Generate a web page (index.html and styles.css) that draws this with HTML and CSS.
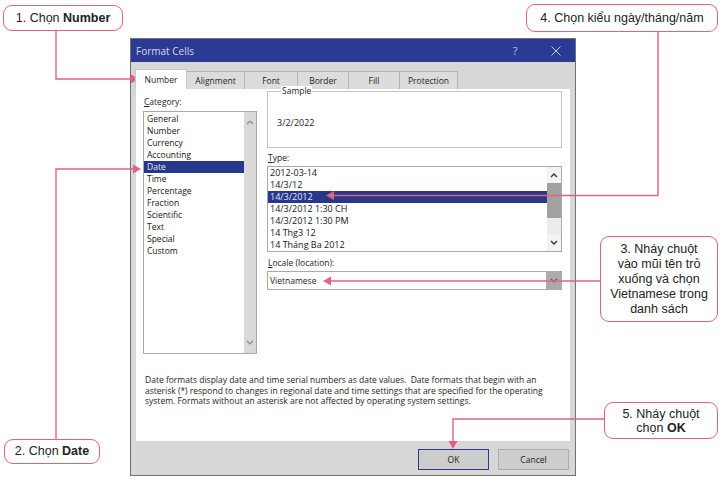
FILE: index.html
```html
<!DOCTYPE html>
<html lang="vi">
<head>
<meta charset="utf-8">
<title>Format Cells</title>
<link rel="stylesheet" href="styles.css">
</head>
<body>
<div class="page">
  <div class="dialog">
    <div class="titlebar">
      <span class="title">Format Cells</span>
      <span class="help">?</span>
      <svg class="close" width="10" height="10" viewBox="0 0 10 10"><path d="M0.5 0.5 L9.5 9.5 M9.5 0.5 L0.5 9.5" stroke="#c9d0ee" stroke-width="1" fill="none"/></svg>
    </div>
    <div class="tabs">
      <div class="tab active t-num">Number</div>
      <div class="tab t-align">Alignment</div>
      <div class="tab t-font">Font</div>
      <div class="tab t-border">Border</div>
      <div class="tab t-fill">Fill</div>
      <div class="tab t-prot">Protection</div>
    </div>
    <div class="panel">
      <div class="cols">
        <div class="leftcol">
          <div class="label"><u>C</u>ategory:</div>
          <div class="listbox cat">
            <div class="items">
              <div class="item">General</div>
              <div class="item">Number</div>
              <div class="item">Currency</div>
              <div class="item">Accounting</div>
              <div class="item sel">Date</div>
              <div class="item">Time</div>
              <div class="item">Percentage</div>
              <div class="item">Fraction</div>
              <div class="item">Scientific</div>
              <div class="item">Text</div>
              <div class="item">Special</div>
              <div class="item">Custom</div>
            </div>
            <div class="vscroll cat-scroll">
              <svg width="8" height="6" viewBox="0 0 8 6"><polyline points="1,5 4,2 7,5" fill="none" stroke="#8a8a8a" stroke-width="1.1"/></svg>
              <svg width="8" height="6" viewBox="0 0 8 6"><polyline points="1,1 4,4 7,1" fill="none" stroke="#8a8a8a" stroke-width="1.1"/></svg>
            </div>
          </div>
        </div>
        <div class="rightcol">
          <fieldset class="sample">
            <legend>Sample</legend>
            <div class="sample-val">3/2/2022</div>
          </fieldset>
          <div class="label"><u>T</u>ype:</div>
          <div class="listbox type">
            <div class="items">
              <div class="item">2012-03-14</div>
              <div class="item">14/3/12</div>
              <div class="item sel">14/3/2012</div>
              <div class="item">14/3/2012 1:30 CH</div>
              <div class="item">14/3/2012 1:30 PM</div>
              <div class="item">14 Thg3 12</div>
              <div class="item">14 Tháng Ba 2012</div>
            </div>
            <div class="vscroll type-scroll">
              <div class="arrow">
                <svg width="8" height="6" viewBox="0 0 8 6"><polyline points="1,5 4,2 7,5" fill="none" stroke="#333" stroke-width="1.3"/></svg>
              </div>
              <div class="thumb"></div>
              <div class="track"></div>
              <div class="arrow">
                <svg width="8" height="6" viewBox="0 0 8 6"><polyline points="1,1 4,4 7,1" fill="none" stroke="#333" stroke-width="1.3"/></svg>
              </div>
            </div>
          </div>
          <div class="label locale-label"><u>L</u>ocale (location):</div>
          <div class="combo">
            <span class="combo-val">Vietnamese</span>
            <div class="combo-btn">
              <svg width="8" height="6" viewBox="0 0 8 6"><polyline points="1,1 4,4 7,1" fill="none" stroke="#7a4a55" stroke-width="1.1"/></svg>
            </div>
          </div>
        </div>
      </div>
      <p class="desc">Date formats display date and time serial numbers as date values.&nbsp; Date formats that begin with an<br>asterisk (*) respond to changes in regional date and time settings that are specified for the operating<br>system. Formats without an asterisk are not affected by operating system settings.</p>
    </div>
    <div class="footer">
      <button class="btn ok">OK</button>
      <button class="btn">Cancel</button>
    </div>
  </div>

  <svg class="connectors" width="720" height="483" viewBox="0 0 720 483">
    <g fill="none" stroke="#e3637f" stroke-width="1.4">
      <path d="M56 31 V79 H132"/>
      <path d="M56 439 V169 H134"/>
      <path d="M658 32 V195.5 H333"/>
      <path d="M600 281 H330"/>
      <path d="M604 419 H453 V442"/>
    </g>
    <g fill="#e3637f">
      <polygon points="131,74.5 139,79 131,83.5"/>
      <polygon points="133,164.5 141,169 133,173.5"/>
      <polygon points="334,191 326,195.5 334,200"/>
      <polygon points="331,276.5 323,281 331,285.5"/>
      <polygon points="448.5,441 453,449 457.5,441"/>
    </g>
  </svg>

  <div class="callout c1"><span>1. Chọn <b>Number</b></span></div>
  <div class="callout c4"><span>4. Chọn kiểu ngày/tháng/năm</span></div>
  <div class="callout c3"><span>3. Nháy chuột<br>vào mũi tên trỏ<br>xuống và chọn<br>Vietnamese trong<br>danh sách</span></div>
  <div class="callout c5"><span>5. Nháy chuột<br>chọn <b>OK</b></span></div>
  <div class="callout c2"><span>2. Chọn <b>Date</b></span></div>
</div>
</body>
</html>
```

FILE: styles.css
```css
body {
  margin: 0;
  background: #ffffff;
}

.page {
  position: relative;
  width: 720px;
  height: 483px;
  box-sizing: border-box;
  padding: 38px 0 0 130px;
  overflow: hidden;
  font-family: "Open Sans", "Noto Sans", sans-serif;
  color: #222;
}

/* ---------- dialog ---------- */
.dialog {
  width: 446px;
  height: 438px;
  box-sizing: border-box;
  border: 1px solid #707070;
  background: #d7d7d7;
  display: flex;
  flex-direction: column;
}

.titlebar {
  flex: none;
  height: 23px;
  background: #2b3a92;
  display: flex;
  align-items: center;
  padding-left: 5px;
  color: #d3d9f1;
  font-size: 10px;
}

.title {
  flex: 1;
}

.help {
  width: 10px;
  margin-right: 31px;
  text-align: center;
  font-size: 11px;
  color: #b7c0e6;
}

.close {
  margin-right: 14px;
}

.tabs {
  flex: none;
  height: 27px;
  display: flex;
  align-items: flex-end;
  padding-left: 4px;
}

.tab {
  height: 18px;
  box-sizing: border-box;
  border: 1px solid #b4b4b4;
  border-bottom: none;
  background: #dcdcdc;
  font-size: 8.5px;
  display: flex;
  align-items: center;
  justify-content: center;
  color: #1e1e1e;
  margin-left: -1px;
}

.tab.active {
  height: 20px;
  background: #ffffff;
  border-color: #c8c8c8;
  margin-left: 0;
  position: relative;
  z-index: 1;
}

.t-num { width: 52px; }
.t-align { width: 59px; }
.t-font { width: 54px; }
.t-border { width: 52px; }
.t-fill { width: 52px; }
.t-prot { width: 59px; }

.panel {
  flex: none;
  height: 352px;
  margin: 0 5px;
  background: #ffffff;
}

.cols {
  display: flex;
}

.leftcol {
  width: 114px;
  margin: 7px 0 0 7px;
}

.rightcol {
  width: 295px;
  margin: -3px 0 0 10px;
}

.label {
  font-size: 8.5px;
  line-height: 12px;
  height: 12px;
  color: #1e1e1e;
  padding-left: 1px;
}

.listbox {
  box-sizing: border-box;
  border: 1px solid #a9a9a9;
  display: flex;
}

.cat {
  margin-top: 3px;
  height: 243px;
}

.items {
  flex: 1;
}

.cat .items {
  padding-top: 1px;
}

.item {
  height: 12px;
  line-height: 12px;
  font-size: 8.5px;
  padding-left: 3px;
  color: #161616;
  white-space: nowrap;
}

.type .item {
  padding-left: 2px;
  font-size: 9px;
}

.item.sel {
  background: #27378b;
  color: #e4e8f7;
}

.vscroll {
  flex: none;
  display: flex;
  flex-direction: column;
  align-items: center;
}

.cat-scroll {
  width: 12px;
  background: #d9d9d9;
  justify-content: space-between;
  padding: 7px 0;
  box-sizing: border-box;
}

.type-scroll {
  width: 14px;
  background: #ececec;
}

.type-scroll .arrow {
  height: 16px;
  width: 14px;
  display: flex;
  align-items: center;
  justify-content: center;
  background: #f4f4f4;
}

.type-scroll .thumb {
  width: 14px;
  height: 35px;
  background: #a2a2a2;
}

.type-scroll .track {
  flex: 1;
}

.sample {
  margin: 0;
  padding: 21px 8px 18px 9px;
  border: 1px solid #c3c3c3;
  min-width: 0;
}

.sample legend {
  font-size: 8.5px;
  line-height: 10px;
  padding: 0 1px;
  margin-left: 4px;
  color: #1e1e1e;
  background: #ffffff;
}

.sample-val {
  font-size: 9px;
  line-height: 12px;
  height: 12px;
}

.rightcol > .label {
  margin-top: 4px;
}

.type {
  margin-top: 2px;
  height: 86px;
}

.rightcol > .locale-label {
  margin-top: 5px;
}

.combo {
  margin-top: 2px;
  height: 19px;
  box-sizing: border-box;
  border: 1px solid #a9a9a9;
  display: flex;
  align-items: center;
  padding-left: 2px;
  font-size: 8.5px;
}

.combo-btn {
  margin-left: auto;
  width: 15px;
  height: 17px;
  background: #ababab;
  display: flex;
  align-items: center;
  justify-content: center;
}

.desc {
  margin: 21px 0 0 9px;
  font-size: 8.5px;
  line-height: 10.5px;
  color: #1e1e1e;
  white-space: nowrap;
}

.footer {
  flex: 1;
  display: flex;
  justify-content: flex-end;
  align-items: flex-start;
  gap: 9px;
  padding: 8px 6px 0 0;
}

.btn {
  width: 71px;
  height: 21px;
  margin: 0;
  padding: 0;
  font-family: "Open Sans", "Noto Sans", sans-serif;
  font-size: 8.5px;
  color: #1e1e1e;
  background: #cdcdcd;
  border: 1px solid #adadad;
}

.btn.ok {
  border-color: #2b3a92;
}

/* ---------- annotations ---------- */
.connectors {
  position: absolute;
  left: 0;
  top: 0;
  pointer-events: none;
}

.callout {
  position: absolute;
  box-sizing: border-box;
  border: 1.5px solid #e3637f;
  border-radius: 9px;
  background: #ffffff;
  font-family: "Liberation Sans", Arial, sans-serif;
  font-size: 12.5px;
  line-height: 15px;
  color: #222;
  display: flex;
  align-items: center;
  justify-content: center;
  text-align: center;
}

.c1 { left: 3px; top: 5px; width: 120px; height: 26px; }
.c4 { left: 526px; top: 4px; width: 192px; height: 28px; }
.c3 { left: 600px; top: 236px; width: 118px; height: 86px; }
.c5 { left: 604px; top: 402px; width: 114px; height: 37px; line-height: 14px; }
.c2 { left: 4px; top: 439px; width: 96px; height: 25px; }
```
